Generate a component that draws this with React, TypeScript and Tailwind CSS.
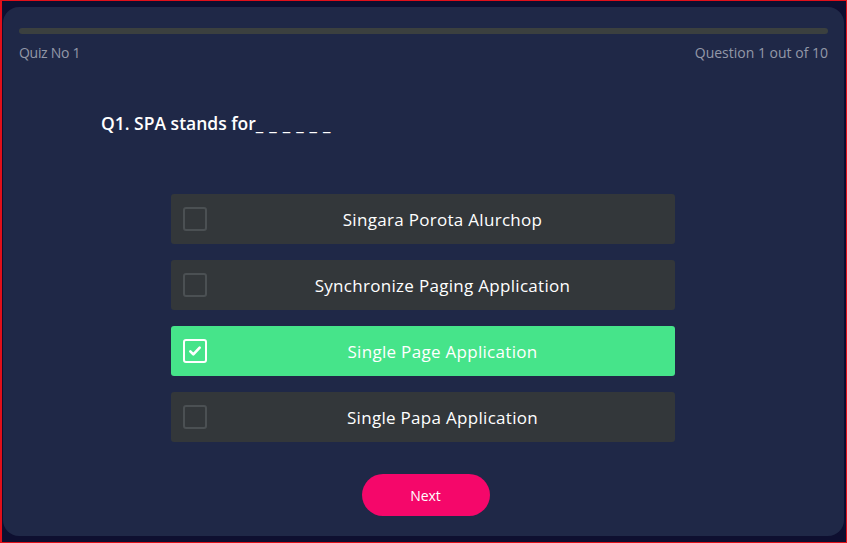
import { useState } from 'react';

const OPTIONS = [
    'Singara Porota Alurchop',
    'Synchronize Paging Application',
    'Single Page Application',
    'Single Papa Application',
];

function CheckBox({ checked }: { checked: boolean }) {
    if (checked) {
        return (
            <div className="w-6 h-6 rounded-[3px] border-2 border-white flex items-center justify-center">
                <svg viewBox="0 0 24 24" className="w-4 h-4" fill="none" stroke="white" strokeWidth={4} strokeLinecap="round" strokeLinejoin="round">
                    <path d="M5 12.5l4.5 4.5L19 7" />
                </svg>
            </div>
        );
    }
    return <div className="w-6 h-6 rounded-[3px] border-2 border-[#4b5053]" />;
}

export default function App() {
    const [selected, setSelected] = useState(2);

    return (
        <div
            className="w-full h-[543px] bg-[#0e0f30] border border-l-2 border-[#e0101a] pl-px pr-[2px] pt-[6px] pb-[6px]"
            style={{ fontFamily: '"Open Sans", sans-serif' }}
        >
            <div className="h-full rounded-[16px] bg-[#1f2847] px-4 pt-[21px] flex flex-col">
                <div className="h-[6px] w-full rounded-full bg-[#3b403f]" />
                <div className="flex justify-between mt-[8px] text-[14px] text-[#9398a8]">
                    <span className="tracking-[-0.3px]">Quiz No 1</span>
                    <span>Question 1 out of 10</span>
                </div>

                <h2 className="mt-[47px] ml-[82px] text-[17.5px] font-semibold text-white">
                    Q1. SPA stands for<span className="tracking-[6px]">______</span>
                </h2>

                <div className="mt-[58px] flex flex-col gap-4 items-center pr-px">
                    {OPTIONS.map((opt, i) => {
                        const active = selected === i;
                        return (
                            <button
                                key={opt}
                                onClick={() => setSelected(i)}
                                className={
                                    'w-[504px] h-[50px] rounded-[3px] flex items-center pl-3 text-[17px] tracking-[0.3px] text-white ' +
                                    (active ? 'bg-[#46e48a]' : 'bg-[#33373a]')
                                }
                            >
                                <CheckBox checked={active} />
                                <span className="flex-1 text-center pl-[3px]">{opt}</span>
                            </button>
                        );
                    })}
                </div>

                <div className="mt-8 flex justify-center pl-[4px]">
                    <button className="w-32 h-[42px] rounded-full bg-[#f5076a] text-white text-[14px] font-medium">
                        Next
                    </button>
                </div>
            </div>
        </div>
    );
}
